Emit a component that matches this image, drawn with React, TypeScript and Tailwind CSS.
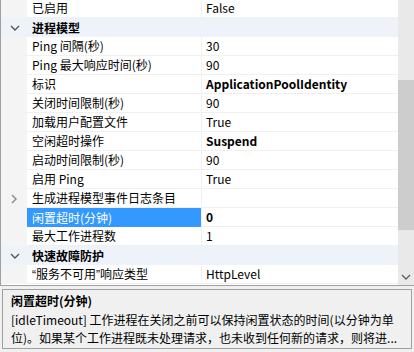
import type { ReactNode } from 'react';

type Row =
  | { kind: 'cat'; label: string }
  | { kind: 'item'; label: ReactNode; value?: string; bold?: boolean; selected?: boolean; collapsed?: boolean };

const rows: Row[] = [
  { kind: 'item', label: '已启用', value: 'False' },
  { kind: 'cat', label: '进程模型' },
  { kind: 'item', label: 'Ping 间隔(秒)', value: '30' },
  { kind: 'item', label: 'Ping 最大响应时间(秒)', value: '90' },
  { kind: 'item', label: '标识', value: 'ApplicationPoolIdentity', bold: true },
  { kind: 'item', label: '关闭时间限制(秒)', value: '90' },
  { kind: 'item', label: '加载用户配置文件', value: 'True' },
  { kind: 'item', label: '空闲超时操作', value: 'Suspend', bold: true },
  { kind: 'item', label: '启动时间限制(秒)', value: '90' },
  { kind: 'item', label: '启用 Ping', value: 'True' },
  { kind: 'item', label: '生成进程模型事件日志条目', collapsed: true },
  { kind: 'item', label: '闲置超时(分钟)', value: '0', bold: true, selected: true },
  { kind: 'item', label: '最大工作进程数', value: '1' },
  { kind: 'cat', label: '快速故障防护' },
  {
    kind: 'item',
    label: (
      <>
        <span className="font-['Liberation_Sans',sans-serif]">“</span>服务不可用
        <span className="font-['Liberation_Sans',sans-serif]">”</span>响应类型
      </>
    ),
    value: 'HttpLevel',
  },
];

function ChevronDown({ className }: { className?: string }) {
  return (
    <svg width="10" height="6" viewBox="0 0 10 6" className={className}>
      <path d="M1 1 L5 5 L9 1" fill="none" stroke="currentColor" strokeWidth="1.4" />
    </svg>
  );
}

function ChevronRight({ className }: { className?: string }) {
  return (
    <svg width="6" height="10" viewBox="0 0 6 10" className={className}>
      <path d="M1 1 L5 5 L1 9" fill="none" stroke="currentColor" strokeWidth="1.4" />
    </svg>
  );
}

function GridRow({ row }: { row: Row }) {
  if (row.kind === 'cat') {
    return (
      <div className="flex h-[19px] shrink-0 items-center bg-[#eef3fa]">
        <div className="flex w-[26px] shrink-0 justify-center pl-[1px] text-[#555]">
          <ChevronDown />
        </div>
        <div className="pl-[5px] font-bold">{row.label}</div>
      </div>
    );
  }
  return (
    <div className="flex h-[19px] shrink-0">
      <div className="flex w-[26px] shrink-0 items-center justify-center bg-[#f4f4f4] text-[#888]">
        {row.collapsed && <ChevronRight />}
      </div>
      <div
        className={
          row.selected
            ? 'flex w-[174px] shrink-0 items-center bg-[#3399ff] pl-[5px] text-white'
            : 'flex w-[174px] shrink-0 items-center border-b border-[#f0f0f0] pl-[5px]'
        }
      >
        <span className="whitespace-nowrap">{row.label}</span>
      </div>
      <div
        className={
          'flex flex-1 items-center border-b border-l border-[#f0f0f0] pl-[4px] ' +
          (row.bold ? 'font-bold' : '')
        }
      >
        {row.value}
      </div>
    </div>
  );
}

export default function App() {
  return (
    <div className="h-[352px] w-[414px] overflow-hidden bg-[#f0f0f0] font-['Noto_Sans_CJK_SC',sans-serif] text-[12px] text-black">
      {/* property grid */}
      <div className="flex h-[286px] border-b border-l border-[#a0a0a0]">
        <div className="flex w-[397px] shrink-0 flex-col overflow-hidden bg-white">
          <div className="-mt-px flex flex-col">
            {rows.map((r, i) => (
              <GridRow key={i} row={r} />
            ))}
          </div>
        </div>
        <div className="flex w-[16px] shrink-0 flex-col bg-[#e9e9e9]">
          <div className="h-[80px]" />
          <div className="h-[150px] bg-[#cdcdcd]" />
          <div className="flex-1" />
          <div className="flex h-[17px] items-center justify-center text-[#606060]">
            <ChevronDown />
          </div>
        </div>
      </div>

      {/* description */}
      <div className="mx-[2px] mt-[3px] h-[60px] overflow-hidden border border-[#a0a0a0] px-[8px] pt-[2px] leading-[18.5px]">
        <div className="font-bold">闲置超时(分钟)</div>
        <div className="whitespace-nowrap">[idleTimeout] 工作进程在关闭之前可以保持闲置状态的时间(以分钟为单</div>
        <div className="whitespace-nowrap">位)。如果某个工作进程既未处理请求，也未收到任何新的请求，则将进...</div>
      </div>
    </div>
  );
}
